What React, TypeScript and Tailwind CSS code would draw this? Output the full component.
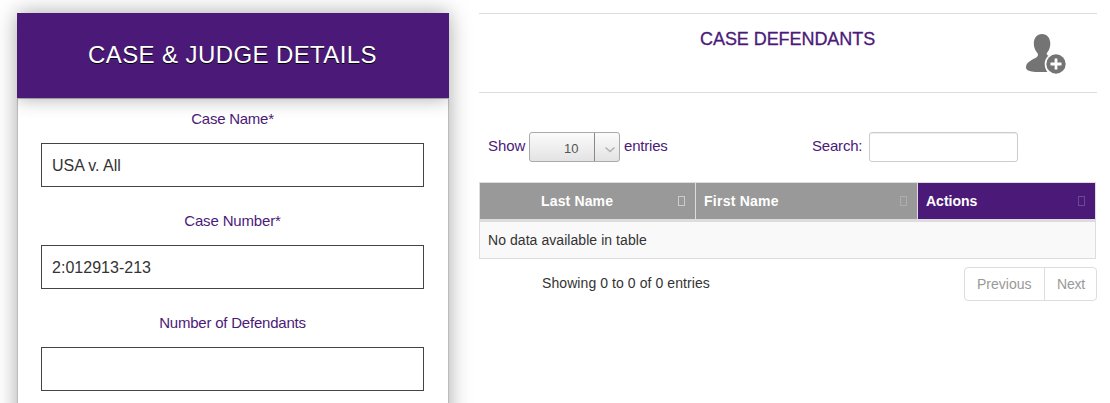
import React from "react";

const fields = [
  { label: "Case Name*", value: "USA v. All", spacing: "tracking-[-0.25px]", inputSpacing: "tracking-[-0.04px]" },
  { label: "Case Number*", value: "2:012913-213", spacing: "tracking-[-0.15px]", inputSpacing: "tracking-[0.02px]" },
  { label: "Number of Defendants", value: "", spacing: "tracking-[-0.22px]", inputSpacing: "tracking-[0px]" },
];

function SortBox({ className }: { className: string }) {
  return <span className={`h-[10px] w-[7px] border ${className}`} />;
}

function AddPerson() {
  return (
    <svg width="42" height="42" viewBox="0 0 42 42" className="shrink-0">
      <path
        d="M17 1C12 1 8.800 5 8.800 10.500c0 4 1.700 7.700 4.100 10.200.400 2.300-.900 3.500-2.900 4.500C5.500 27.500 1 29.500 1 34.500c0 3.500 6 4.500 12 4.500h9.500c-4-5-2.500-13 2.500-15.500-2-1-3.500-1.500-3.300-3.300C24.200 17.500 25.300 14 25.300 10.500 25.300 5 22 1 17 1z"
        fill="#747474"
      />
      <circle cx="31" cy="31" r="11.300" fill="#fff" />
      <circle cx="31" cy="31" r="9.700" fill="#747474" />
      <path d="M31 25.500v11M25.500 31h11" stroke="#fff" strokeWidth="2.800" />
    </svg>
  );
}

export default function App() {
  return (
    <div className="flex h-[403px] w-[1110px] overflow-hidden bg-white pt-[13px] pl-[17px] font-['Liberation_Sans',Arial,sans-serif]">
      <section className="h-[430px] w-[432px] shrink-0 border-x border-[#bcbcbc] shadow-[0_0_20px_rgba(0,0,0,0.35)]">
        <h1 className="-mx-px flex h-[85px] items-center justify-center bg-[#4b1a78] pr-[1px] pb-[2px] text-[24px] tracking-[0.4px] text-white shadow-[0_0_18px_rgba(0,0,0,0.35)] [clip-path:inset(0_0_-20px_0)] [text-shadow:0_1px_0_#000]">
          <span>CASE &amp; JUDGE DETAILS</span>
        </h1>
        <div className="border-t border-[#bcbcbc] px-[23px] pt-[10px]">
          {fields.map((f) => (
            <div key={f.label} className="h-[102px]">
              <label className={`block h-[34px] pr-[1px] text-center text-[15px] leading-[20px] text-[#4b1a78] ${f.spacing}`}>
                {f.label}
              </label>
              <div className={`flex h-[44px] w-[383px] items-center border border-[#444] pt-[2px] pl-[10px] text-[16px] text-[#333] ${f.inputSpacing}`}>
                {f.value}
              </div>
            </div>
          ))}
        </div>
      </section>

      <section className="ml-[30px] w-[618px] shrink-0">
        <header className="flex h-[80px] border-y border-[#ddd]">
          <h2 className="ml-[221px] w-[325px] pt-[15px] text-[18px] leading-[20px] tracking-[-0.06px] text-[#4b1a78] [-webkit-text-stroke:0.3px_#4b1a78]">
            <span>CASE DEFENDANTS</span>
          </h2>
          <div className="pt-[19px]">
            <AddPerson />
          </div>
        </header>

        <div className="mt-[39px] flex h-[30px] text-[15px] text-[#4b1a78]">
          <span className="ml-[9px] w-[41px] leading-[27px] tracking-[-0.1px]">Show</span>
          <div className="flex h-[30px] w-[91px] rounded-[3px] border border-[#aaa] bg-gradient-to-b from-[#fbfbfb] to-[#e3e3e3]">
            <span className="w-[65px] border-r border-[#888] pl-[34px] text-[13px] leading-[32px] text-[#555]">10</span>
            <svg width="24" height="28" viewBox="0 0 24 28" fill="none">
              <path d="M10.500 14.500l4.500 4 4.500-4" stroke="#b0b0b0" strokeWidth="1.500" />
            </svg>
          </div>
          <span className="ml-[4px] w-[188px] leading-[27px] tracking-[-0.2px]">entries</span>
          <span className="w-[57px] leading-[27px] tracking-[-0.2px]">Search:</span>
          <div className="h-[30px] w-[149px] rounded-[3px] border border-[#ccc] shadow-[inset_0_1px_1px_rgba(0,0,0,0.075)]" />
        </div>

        <div className="mt-[20px] w-[617px] border border-[#ddd]">
          <div className="flex h-[39px] border-b-3 border-[#ddd] text-[14px] font-bold text-white">
            <div className="flex w-[216px] items-center justify-between border-r border-[#ddd] bg-[#999] pr-[10px] pl-[61px] tracking-[0.15px]">
              <span>Last Name</span>
              <SortBox className="border-[#ccc]" />
            </div>
            <div className="flex w-[222px] items-center justify-between border-r border-[#ddd] bg-[#999] pr-[10px] pl-[8px] tracking-[0.25px]">
              <span>First Name</span>
              <SortBox className="border-[#adadad]" />
            </div>
            <div className="flex flex-1 items-center justify-between bg-[#4b1a78] pr-[10px] pl-[8px]">
              <span>Actions</span>
              <SortBox className="border-[#6f4893]" />
            </div>
          </div>
          <div className="h-[36px] bg-[#f9f9f9] pl-[8px] text-[14px] leading-[36px] tracking-[0.06px] text-[#333]">
            <span>No data available in table</span>
          </div>
        </div>

        <div className="mt-[8px] flex justify-between text-[14px]">
          <span className="pl-[63px] leading-[32px] tracking-[0.08px] text-[#333]">Showing 0 to 0 of 0 entries</span>
          <div className="flex h-[34px] w-[133px] rounded-[4px] border border-[#ddd] leading-[32px] text-[#999]">
            <span className="w-[80px] border-r border-[#ddd] pl-[12px]">Previous</span>
            <span className="pl-[12px] tracking-[-0.2px]">Next</span>
          </div>
        </div>
      </section>
    </div>
  );
}
